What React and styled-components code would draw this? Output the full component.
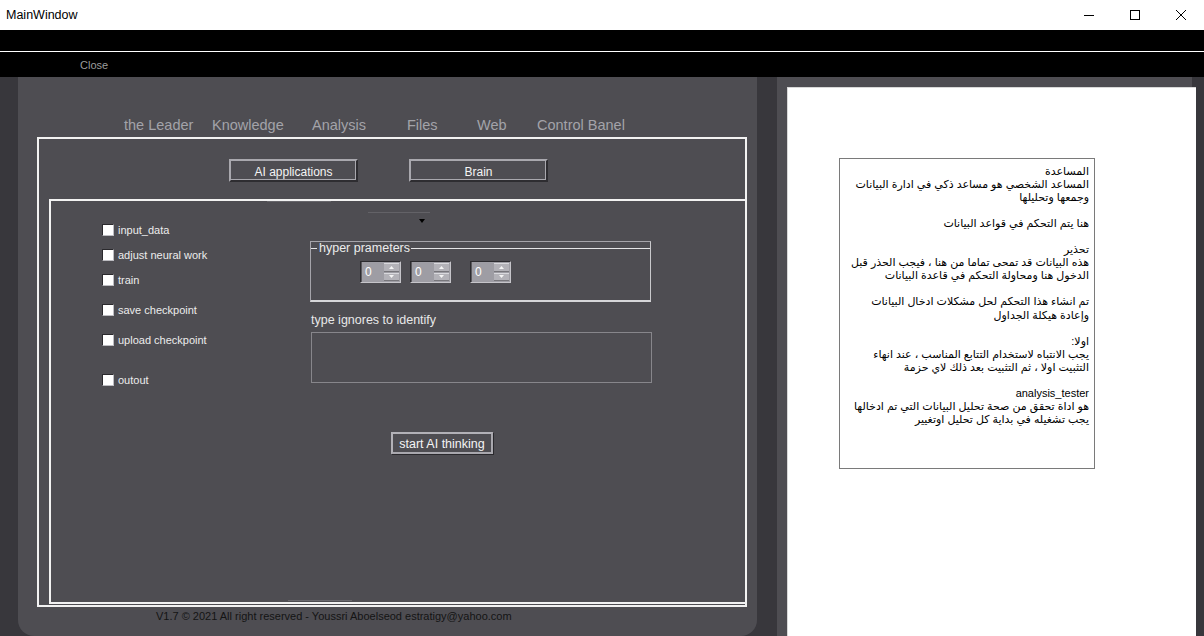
import styled, { createGlobalStyle } from 'styled-components';

const GlobalStyle = createGlobalStyle`
  html, body {
    margin: 0;
    padding: 0;
    width: 1204px;
    height: 636px;
    overflow: hidden;
    background: #38373c;
    font-family: "Liberation Sans", "DejaVu Sans", sans-serif;
  }
  * { box-sizing: border-box; }
`

const tabs = [
    {label: "the Leader", width: 88},
    {label: "Knowledge", width: 100},
    {label: "Analysis", width: 95},
    {label: "Files", width: 70},
    {label: "Web", width: 60},
    {label: "Control Banel", width: 110},
]

const checks = [
    {label: "input_data", gap: 0},
    {label: "adjust neural work", gap: 11},
    {label: "train", gap: 11},
    {label: "save checkpoint", gap: 16},
    {label: "upload checkpoint", gap: 16},
    {label: "outout", gap: 26},
]

const spins = [0, 9, 19]

const helpLines = [
    "المساعدة",
    "المساعد الشخصي هو مساعد ذكي في ادارة البيانات",
    "وجمعها وتحليلها",
    "",
    "هنا يتم التحكم في قواعد البيانات",
    "",
    "تحذير",
    "هذه البيانات قد تمحى تماما من هنا ، فيجب الحذر قبل",
    "الدخول هنا ومحاولة التحكم في قاعدة البيانات",
    "",
    "تم انشاء هذا التحكم لحل مشكلات ادخال البيانات",
    "وإعادة هيكلة الجداول",
    "",
    "اولا:",
    "يجب الانتباه لاستخدام التتابع المناسب ، عند انهاء",
    "التثبيت اولا ، ثم التثبيت بعد ذلك لاي حزمة",
    "",
    "analysis_tester",
    "هو اداة تحقق من صحة تحليل البيانات التي تم ادخالها",
    "يجب تشغيله في بداية كل تحليل اوتغيير",
]

const WindowIcon = ({type}) => (
    <svg width="10" height="10" viewBox="0 0 10 10" fill="none" stroke="#000" strokeWidth="1">
        {type === "min" && <line x1="0" y1="5.5" x2="10" y2="5.5"/>}
        {type === "max" && <rect x="0.5" y="0.5" width="9" height="9"/>}
        {type === "close" && <path d="M0 0 L10 10 M10 0 L0 10"/>}
    </svg>
)

const SpinBox = ({left}) => (
    <Spin left={left}>
        <SpinValue>0</SpinValue>
        <SpinButtons>
            <SpinArrow>
                <svg width="5" height="3" viewBox="0 0 5 3"><path d="M2.5 0 L5 3 L0 3 Z" fill="#f4f4f4"/></svg>
            </SpinArrow>
            <SpinArrow>
                <svg width="5" height="3" viewBox="0 0 5 3"><path d="M0 0 L5 0 L2.5 3 Z" fill="#f4f4f4"/></svg>
            </SpinArrow>
        </SpinButtons>
    </Spin>
)

const App = () => {
    return <>
        <GlobalStyle/>
        <TitleBar>
            <Title>MainWindow</Title>
            <Controls>
                <ControlButton><WindowIcon type="min"/></ControlButton>
                <ControlButton><WindowIcon type="max"/></ControlButton>
                <ControlButton><WindowIcon type="close"/></ControlButton>
            </Controls>
        </TitleBar>
        <MenuBar>
            <MenuTop/>
            <MenuLine/>
            <MenuBottom>
                <MenuItem>Close</MenuItem>
            </MenuBottom>
        </MenuBar>
        <Body>
            <MainPanel>
                <Tabs>
                    {tabs.map(t => <Tab key={t.label} width={t.width}>{t.label}</Tab>)}
                </Tabs>
                <OuterFrame>
                    <TopSection>
                        <Button width={129}>AI applications</Button>
                        <Button width={139}>Brain</Button>
                    </TopSection>
                    <InnerFrame>
                        <TopGrip/>
                        <CheckColumn>
                            {checks.map(c =>
                                <CheckRow key={c.label} gap={c.gap}>
                                    <CheckBox/>
                                    <CheckLabel>{c.label}</CheckLabel>
                                </CheckRow>
                            )}
                        </CheckColumn>
                        <RightColumn>
                            <Combo>
                                <ComboArrow/>
                            </Combo>
                            <GroupBox>
                                <GroupFrame>
                                    <GroupTitle>hyper prameters</GroupTitle>
                                    <SpinRow>
                                        {spins.map((g, i) => <SpinBox key={i} left={g}/>)}
                                    </SpinRow>
                                </GroupFrame>
                            </GroupBox>
                            <FieldLabel>type ignores to identify</FieldLabel>
                            <TextArea/>
                            <StartButton>start AI thinking</StartButton>
                        </RightColumn>
                        <BottomGrip/>
                    </InnerFrame>
                </OuterFrame>
                <Footer>V1.7 © 2021 All right reserved - Youssri Aboelseod estratigy@yahoo.com</Footer>
            </MainPanel>
            <SidePanel>
                <Page>
                    <HelpBox>
                        {helpLines.map((l, i) => <HelpLine key={i}>{l || "\u00a0"}</HelpLine>)}
                    </HelpBox>
                </Page>
            </SidePanel>
        </Body>
    </>
}

export default App;

const TitleBar = styled.div`
  height: 30px;
  background: #ffffff;
  display: flex;
  align-items: center;
  justify-content: space-between;
`

const Title = styled.div`
  padding-left: 6px;
  font-family: "Liberation Sans", "Noto Sans", sans-serif;
  font-size: 12.5px;
  color: #000;
`

const Controls = styled.div`
  display: flex;
  height: 30px;
`

const ControlButton = styled.div`
  width: 46px;
  height: 30px;
  display: flex;
  align-items: center;
  justify-content: center;
`

const MenuBar = styled.div`
  background: #000;
`

const MenuTop = styled.div`
  height: 21px;
`

const MenuLine = styled.div`
  height: 1px;
  background: #ffffff;
`

const MenuBottom = styled.div`
  height: 25px;
  display: flex;
  align-items: center;
  padding-left: 80px;
`

const MenuItem = styled.div`
  font-size: 11px;
  color: #9c9c9c;
  padding-top: 1px;
`

const Body = styled.div`
  display: flex;
  height: 559px;
  background: #38373c;
  padding-left: 18px;
`

const MainPanel = styled.div`
  width: 739px;
  height: 559px;
  background: #4e4d52;
  border-radius: 0 0 16px 16px;
  padding-top: 38px;
`

const Tabs = styled.div`
  display: flex;
  padding-left: 106px;
  height: 22px;
`

const Tab = styled.div`
  width: ${props => props.width}px;
  font-size: 14.5px;
  line-height: 18px;
  padding-top: 1px;
  color: #a3a3a9;
  white-space: nowrap;
`

const OuterFrame = styled.div`
  margin-left: 19px;
  width: 710px;
  height: 470px;
  border: 2px solid #f2f2f2;
  display: flex;
  flex-direction: column;
`

const TopSection = styled.div`
  height: 60px;
  display: flex;
  align-items: flex-start;
  padding-top: 20px;
  padding-left: 190px;
  gap: 51px;
`

const Button = styled.div`
  width: ${props => props.width}px;
  height: 23px;
  padding-top: 2px;
  border: 2px solid #a9a8ae;
  border-right-color: #2e2d31;
  border-bottom-color: #2e2d31;
  box-shadow: inset -1px -1px 0 #a9a8ae;
  display: flex;
  align-items: center;
  justify-content: center;
  font-size: 12px;
  color: #f4f4f4;
`

const InnerFrame = styled.div`
  position: relative;
  flex: 1;
  margin-left: 10px;
  margin-bottom: 1px;
  border-top: 2px solid #f2f2f2;
  border-left: 2px solid #f2f2f2;
  border-bottom: 2px solid #f2f2f2;
  display: grid;
  grid-template-columns: 259px 1fr;
`

const TopGrip = styled.div`
  position: absolute;
  top: 0;
  left: 216px;
  width: 64px;
  height: 1px;
  background: #67666b;
`

const BottomGrip = styled.div`
  position: absolute;
  bottom: 1px;
  left: 237px;
  width: 64px;
  height: 1px;
  background: #6a696e;
`

const CheckColumn = styled.div`
  padding-left: 51px;
  padding-top: 22px;
  display: flex;
  flex-direction: column;
`

const CheckRow = styled.div`
  display: flex;
  align-items: center;
  height: 14px;
  margin-top: ${props => props.gap}px;
`

const CheckBox = styled.div`
  width: 12px;
  height: 12px;
  background: #ffffff;
  border: 1px solid #2a292d;
  border-right-color: #bdbdc2;
  border-bottom-color: #bdbdc2;
`

const CheckLabel = styled.div`
  margin-left: 4px;
  font-size: 11px;
  color: #ececec;
  white-space: nowrap;
`

const RightColumn = styled.div`
  display: flex;
  flex-direction: column;
  align-items: flex-start;
  padding-top: 11px;
`

const Combo = styled.div`
  margin-left: 58px;
  width: 62px;
  height: 14px;
  border-top: 1px solid #636267;
  display: flex;
  align-items: center;
  justify-content: flex-end;
  padding-right: 5px;
`

const ComboArrow = styled.div`
  width: 0;
  height: 0;
  border-left: 3.5px solid transparent;
  border-right: 3.5px solid transparent;
  border-top: 4px solid #000;
  margin-top: 3px;
`

const GroupBox = styled.div`
  margin-top: 15px;
  width: 341px;
  height: 61px;
  border: 1px solid #a5a4aa;
  border-bottom: 2px solid #d6d6d9;
  border-right-color: #c9c9cc;
`

const GroupFrame = styled.fieldset`
  margin: 0;
  padding: 0;
  border: none;
  border-top: 1px solid #e4e4e6;
  min-width: 0;
`

const GroupTitle = styled.legend`
  margin-left: 6px;
  padding: 0 1px 0 2px;
  font-size: 12.5px;
  line-height: 13px;
  color: #ececec;
`

const SpinRow = styled.div`
  display: flex;
  padding-left: 49px;
  padding-top: 6px;
`

const Spin = styled.div`
  margin-left: ${props => props.left}px;
  width: 41px;
  height: 22px;
  background: #9e9da4;
  border: 1px solid #2c2b2f;
  border-right-color: #c6c5ca;
  border-bottom-color: #c6c5ca;
  display: flex;
`

const SpinValue = styled.div`
  flex: 1;
  padding-left: 3px;
  font-size: 12px;
  line-height: 20px;
  color: #ffffff;
  border-left: 1px solid #5a595e;
`

const SpinButtons = styled.div`
  width: 16px;
  display: flex;
  flex-direction: column;
  gap: 1px;
  padding: 1px 1px 1px 0;
`

const SpinArrow = styled.div`
  flex: 1;
  background: #b3b2b8;
  border-top: 1px solid #d8d8dc;
  border-bottom: 1px solid #77767b;
  display: flex;
  align-items: center;
  justify-content: center;
`

const FieldLabel = styled.div`
  margin-top: 11px;
  margin-left: 1px;
  font-size: 12.5px;
  line-height: 15px;
  color: #e8e8e8;
`

const TextArea = styled.div`
  margin-top: 4px;
  margin-left: 1px;
  width: 341px;
  height: 51px;
  border: 1px solid #87868b;
`

const StartButton = styled.div`
  margin-top: 49px;
  margin-left: 81px;
  width: 102px;
  height: 22px;
  padding-top: 1px;
  border: 2px solid #b2b1b7;
  border-right-color: #a9a8ae;
  border-bottom-color: #a9a8ae;
  box-shadow: 1px 1px 0 #2a292d;
  display: flex;
  align-items: center;
  justify-content: center;
  font-size: 12.5px;
  color: #f4f4f4;
`

const Footer = styled.div`
  padding-left: 138px;
  margin-top: 3px;
  font-size: 11px;
  color: #141414;
  white-space: nowrap;
`

const SidePanel = styled.div`
  margin-left: 20px;
  width: 415px;
  height: 559px;
  background: #4e4d52;
  padding-top: 10px;
  padding-left: 10px;
`

const Page = styled.div`
  width: 409px;
  height: 549px;
  background: #ffffff;
  border-left: 1px solid #d8d8d8;
  border-top: 1px solid #d8d8d8;
  padding-top: 70px;
  padding-left: 51px;
`

const HelpBox = styled.div`
  width: 256px;
  height: 311px;
  border: 1px solid #7a7a7a;
  padding: 6px 5px 0 5px;
  direction: rtl;
  text-align: right;
  font-family: "Liberation Sans", "DejaVu Sans", sans-serif;
  font-size: 11px;
  line-height: 13.05px;
  color: #000;
`

const HelpLine = styled.div`
  white-space: nowrap;
  direction: rtl;
  unicode-bidi: plaintext;
`
